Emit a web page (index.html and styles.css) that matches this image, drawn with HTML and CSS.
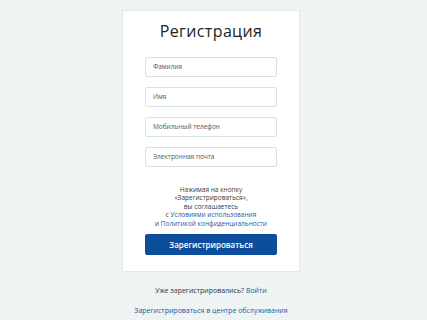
FILE: index.html
```html
<!DOCTYPE html>
<html lang="ru">
<head>
<meta charset="utf-8">
<title>Регистрация</title>
<link rel="stylesheet" href="styles.css">
</head>
<body>
<main class="page">
  <section class="card">
    <h1 class="title">Регистрация</h1>
    <form class="form">
      <div class="field">Фамилия</div>
      <div class="field">Имя</div>
      <div class="field">Мобильный телефон</div>
      <div class="field">Электронная почта</div>
    </form>
    <p class="terms">Нажимая на кнопку<br>«Зарегистрироваться»,<br>вы соглашаетесь<br>с <a class="link">Условиями использования</a><br>и <a class="link">Политикой конфиденциальности</a></p>
    <div class="button">Зарегистрироваться</div>
  </section>
  <p class="login">Уже зарегистрировались? <a class="link">Войти</a></p>
  <p class="center"><a class="link">Зарегистрироваться в центре обслуживания</a></p>
</main>
</body>
</html>
```
FILE: styles.css
```css
html, body {
  margin: 0;
  padding: 0;
  background: #eef3f3;
  font-family: "Open Sans", "Liberation Sans", sans-serif;
  color: #333;
}
.page {
  width: 427px;
  height: 320px;
  display: flex;
  flex-direction: column;
  align-items: center;
  padding-top: 10px;
  padding-right: 5px;
  box-sizing: border-box;
}
.card {
  width: 178px;
  height: 262px;
  box-sizing: border-box;
  background: #fff;
  border: 1px solid #e3e8e8;
  padding: 10px 22px 0;
  display: flex;
  flex-direction: column;
}
.title {
  margin: 0;
  font-family: "Open Sans", sans-serif;
  font-weight: 400;
  font-size: 16px;
  line-height: 20px;
  text-align: center;
  color: #222;
  letter-spacing: 0.35px;
}
.form {
  display: flex;
  flex-direction: column;
  gap: 10px;
  margin-top: 16px;
}
.field {
  height: 20px;
  box-sizing: border-box;
  border: 1px solid #dadfe0;
  border-radius: 2px;
  font-size: 6.5px;
  line-height: 18px;
  padding-left: 7px;
  color: #555;
}
.terms {
  margin: 19px 0 0;
  font-size: 6.5px;
  line-height: 8.4px;
  text-align: center;
  color: #3a3a3a;
}
.link {
  color: #1d5a9e;
  text-decoration: none;
}
.button {
  margin-top: 6px;
  height: 21px;
  background: #0d4e9c;
  border-radius: 2px;
  color: #fff;
  font-size: 8px;
  font-weight: 600;
  line-height: 21px;
  text-align: center;
}
.login {
  margin: 14px 0 0;
  font-size: 7px;
  line-height: 10px;
  color: #333;
}
.center {
  margin: 10px 0 0;
  font-size: 7px;
  line-height: 10px;
}
```
